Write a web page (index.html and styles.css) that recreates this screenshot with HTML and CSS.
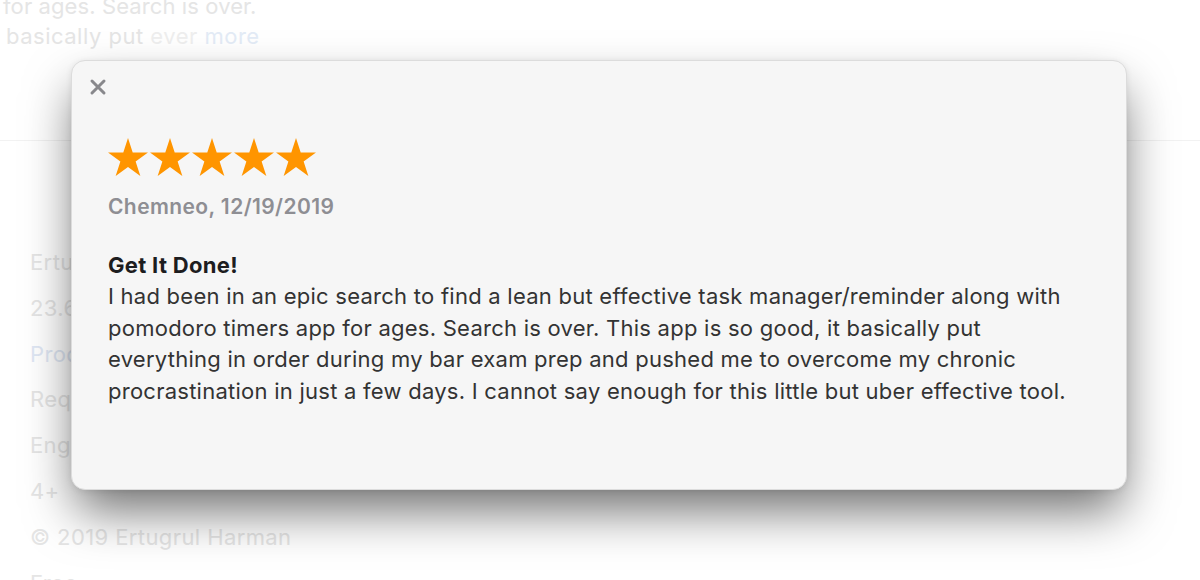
FILE: index.html
```html
<!DOCTYPE html>
<html lang="en">
<head>
<meta charset="utf-8">
<title>Ratings and Reviews</title>
<link rel="stylesheet" href="styles.css">
</head>
<body>
  <div class="page">
    <section class="review-snippet">
      <p class="snippet-line first">for ages. Search is over.</p>
      <p class="snippet-line second">basically put <span class="snippet-fade">ever</span> <span class="more">more</span></p>
    </section>
    <div class="divider"></div>
    <ul class="info-list">
      <li>Ertugrul Harman</li>
      <li>23.6 MB</li>
      <li class="link">Productivity</li>
      <li>Requires macOS 10.13 or later.</li>
      <li>English</li>
      <li>4+</li>
      <li>© 2019 Ertugrul Harman</li>
      <li>Free</li>
    </ul>
  </div>

  <div class="modal" role="dialog">
    <button class="close" aria-label="Close">
      <svg width="18" height="18" viewBox="0 0 18 18"><path d="M3 3 L15 15 M15 3 L3 15" stroke="#88888c" stroke-width="3" stroke-linecap="round"/></svg>
    </button>
    <div class="stars" aria-label="5 out of 5">
      <svg class="star" viewBox="0 0 42 39"><path d="M21 0 L25.71 14.51 L40.97 14.51 L28.63 23.48 L33.34 37.99 L21 29.02 L8.66 37.99 L13.37 23.48 L1.03 14.51 L16.29 14.51 Z"/></svg>
      <svg class="star" viewBox="0 0 42 39"><path d="M21 0 L25.71 14.51 L40.97 14.51 L28.63 23.48 L33.34 37.99 L21 29.02 L8.66 37.99 L13.37 23.48 L1.03 14.51 L16.29 14.51 Z"/></svg>
      <svg class="star" viewBox="0 0 42 39"><path d="M21 0 L25.71 14.51 L40.97 14.51 L28.63 23.48 L33.34 37.99 L21 29.02 L8.66 37.99 L13.37 23.48 L1.03 14.51 L16.29 14.51 Z"/></svg>
      <svg class="star" viewBox="0 0 42 39"><path d="M21 0 L25.71 14.51 L40.97 14.51 L28.63 23.48 L33.34 37.99 L21 29.02 L8.66 37.99 L13.37 23.48 L1.03 14.51 L16.29 14.51 Z"/></svg>
      <svg class="star" viewBox="0 0 42 39"><path d="M21 0 L25.71 14.51 L40.97 14.51 L28.63 23.48 L33.34 37.99 L21 29.02 L8.66 37.99 L13.37 23.48 L1.03 14.51 L16.29 14.51 Z"/></svg>
    </div>
    <p class="author">Chemneo, 12/19/2019</p>
    <h2 class="title">Get It Done!</h2>
    <p class="body">I had been in an epic search to find a lean but effective task manager/reminder along with pomodoro timers app for ages. Search is over. This app is so good, it basically put everything in order during my bar exam prep and pushed me to overcome my chronic procrastination in just a few days. I cannot say enough for this little but uber effective tool.</p>
  </div>
</body>
</html>
```

FILE: styles.css
```css
html, body {
  margin: 0;
  padding: 0;
  background: #ffffff;
  overflow: hidden;
}

body {
  width: 1200px;
  height: 580px;
  position: relative;
  font-family: Inter, "Noto Sans", "Liberation Sans", sans-serif;
}

/* page underneath the sheet, dimmed */
.page {
  color: #e5e5e5;
  font-size: 22px;
  letter-spacing: 0.4px;
}

.review-snippet {
  margin-top: -9px;
}

.snippet-line {
  margin: 0;
  line-height: 30px;
  white-space: nowrap;
}

.snippet-line.first {
  padding-left: 3px;
  letter-spacing: 0.1px;
}

.snippet-line.second {
  padding-left: 6px;
  letter-spacing: 0.5px;
}

.snippet-fade {
  color: #eeeeee;
}

.more {
  color: #e3ebf6;
}

.divider {
  margin-top: 89px;
  height: 1px;
  background: #f2f2f2;
}

.info-list {
  list-style: none;
  margin: 109px 0 0;
  padding: 0 0 0 30px;
}

.info-list li {
  height: 45.8px;
  line-height: 24px;
  white-space: nowrap;
}

.info-list .link {
  color: #dfe7f4;
}

/* review sheet */
.modal {
  position: absolute;
  left: 71px;
  top: 60px;
  width: 1056px;
  height: 430px;
  box-sizing: border-box;
  background: #f6f6f6;
  border: 1px solid #dcdcdc;
  border-radius: 14px;
  box-shadow: 0 25px 50px -5px rgba(0, 0, 0, 0.57), 0 1px 6px rgba(0, 0, 0, 0.08);
  padding: 77px 36px 0;
}

.close {
  position: absolute;
  left: 16px;
  top: 16px;
  width: 20px;
  height: 20px;
  padding: 0;
  border: 0;
  background: none;
  display: flex;
  align-items: center;
  justify-content: center;
}

.stars {
  display: flex;
  gap: 0;
  height: 39px;
  margin-left: -1px;
  fill: #ff9500;
}

.star {
  width: 42px;
  height: 39px;
}

.author {
  margin: 17px 0 0;
  font-size: 21px;
  font-weight: 600;
  letter-spacing: 0.4px;
  color: #8e8e93;
  line-height: 26px;
}

.title {
  margin: 31px 0 0;
  font-size: 22px;
  font-weight: 700;
  letter-spacing: 0.3px;
  color: #1d1d1f;
  line-height: 28px;
}

.body {
  margin: 2px 0 0;
  font-size: 22px;
  letter-spacing: 0.25px;
  line-height: 31.5px;
  color: #333333;
}
```
